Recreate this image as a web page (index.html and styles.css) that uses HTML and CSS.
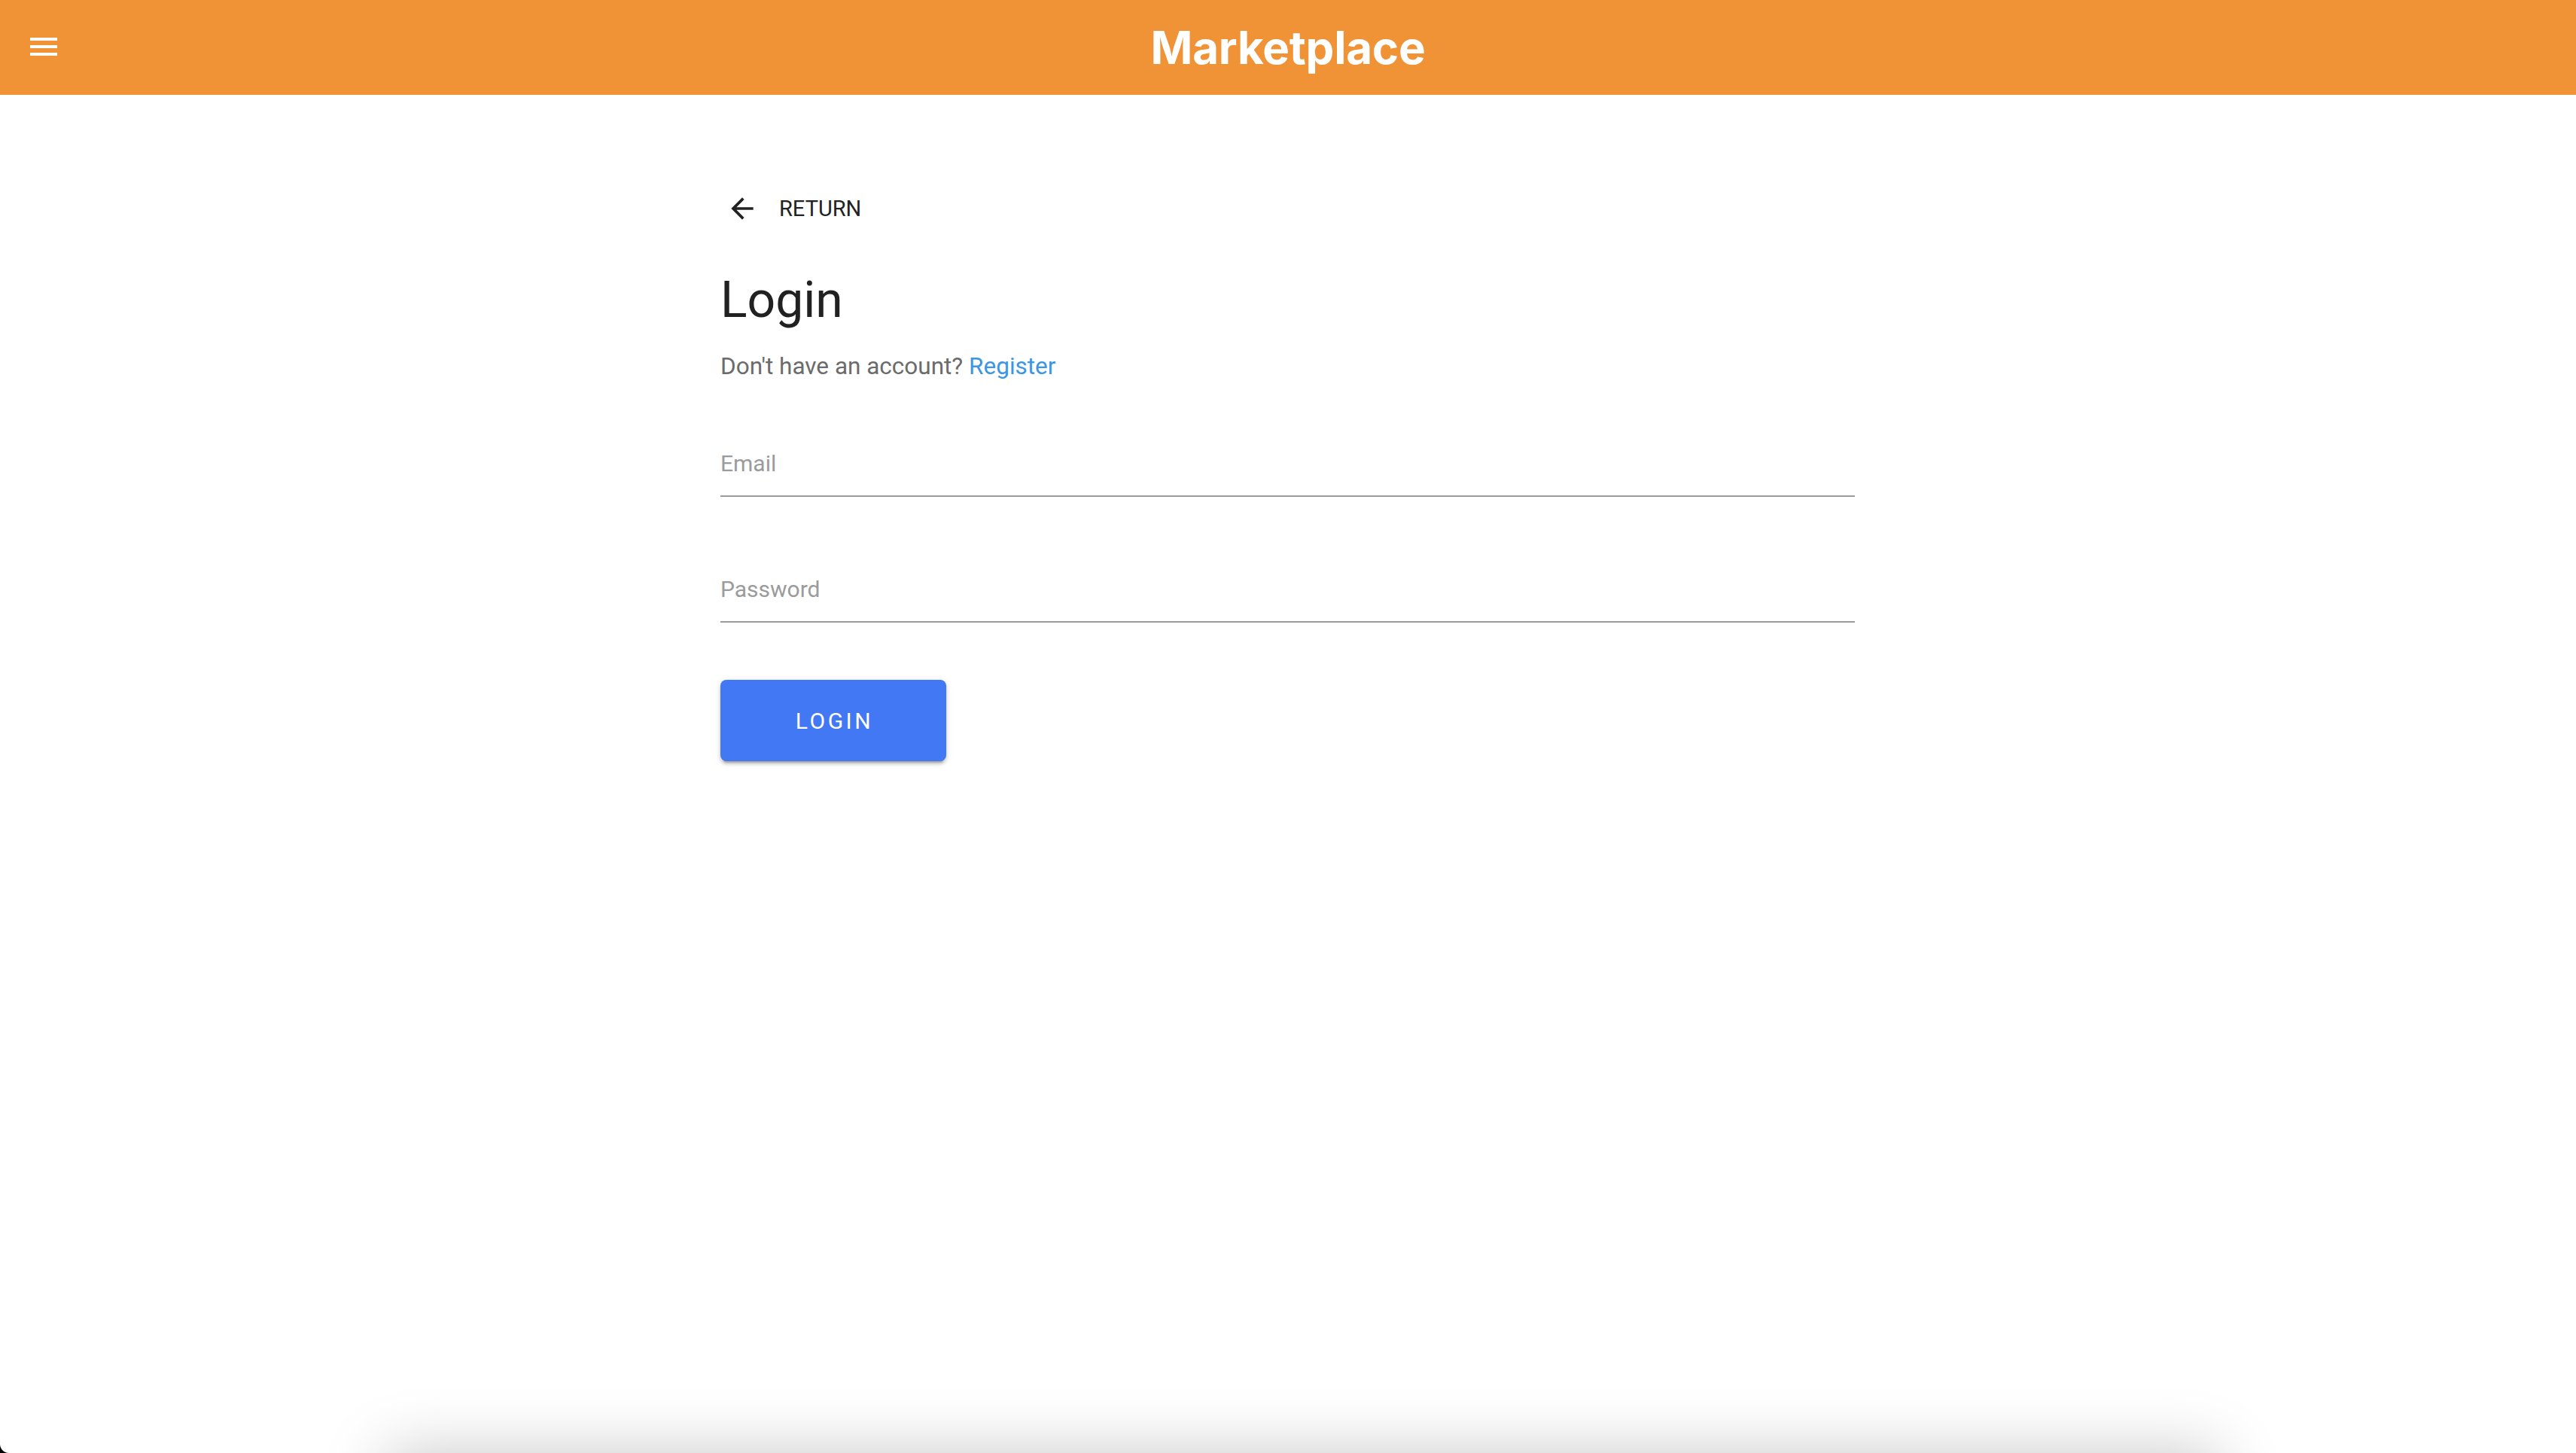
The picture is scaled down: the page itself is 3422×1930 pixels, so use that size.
FILE: index.html
```html
<!DOCTYPE html>
<html lang="en">
<head>
<meta charset="utf-8">
<title>Marketplace - Login</title>
<link rel="stylesheet" href="styles.css">
</head>
<body>
<header class="appbar">
  <button class="menu-btn" aria-label="menu">
    <svg width="48" height="48" viewBox="0 0 24 24"><path fill="#fff" d="M3 18h18v-2H3v2zm0-5h18v-2H3v2zm0-7v2h18V6H3z"/></svg>
  </button>
  <h1 class="brand">Marketplace</h1>
  <div></div>
</header>
<main class="container">
  <a class="return" href="#">
    <svg class="return-icon" width="44" height="44" viewBox="0 0 24 24"><path fill="#222" d="M20 11H7.83l5.59-5.59L12 4l-8 8 8 8 1.41-1.41L7.83 13H20v-2z"/></svg>
    <span>RETURN</span>
  </a>
  <h2 class="title">Login</h2>
  <p class="subtitle">Don't have an account? <a class="link" href="#">Register</a></p>
  <div class="field field-email"><span class="label">Email</span></div>
  <div class="field field-password"><span class="label">Password</span></div>
  <button class="login-btn">LOGIN</button>
</main>
<div class="offscreen-sheet"></div>
<div class="corner"></div>
</body>
</html>
```
FILE: styles.css
```css
html, body {
  margin: 0;
  padding: 0;
  background: #fff;
}
body {
  font-family: Roboto, "Noto Sans", sans-serif;
  width: 3422px;
  height: 1930px;
  overflow: hidden;
}
.appbar {
  height: 126px;
  background: #f09337;
  display: grid;
  grid-template-columns: 1fr auto 1fr;
  align-items: center;
}
.menu-btn {
  background: none;
  border: 0;
  padding: 0;
  margin-left: 34px;
  width: 48px;
  height: 48px;
  display: flex;
  margin-top: -2px;
}
.brand {
  margin: 0;
  font-family: Inter, "Noto Sans", sans-serif;
  font-weight: 700;
  font-size: 60px;
  line-height: 72px;
  color: #fff;
  letter-spacing: -0.2px;
}
.container {
  width: 1507px;
  margin-left: calc(50% - 754px);
}
.return {
  display: flex;
  align-items: center;
  height: 44px;
  margin-top: 129px;
  text-decoration: none;
  color: #222;
  font-size: 29px;
  line-height: 44px;
  width: max-content;
}
.return-icon {
  margin-left: 7px;
  margin-right: 27px;
}
.title {
  margin: 60px 0 0;
  font-weight: 400;
  font-size: 66px;
  line-height: 80px;
  color: #212121;
}
.subtitle {
  margin: 26px 0 0;
  font-size: 31.5px;
  line-height: 44px;
  color: #6b6b6b;
}
.link {
  color: #3b96e3;
  text-decoration: none;
}
.field {
  border-bottom: 2px solid #9a9a9a;
  padding-bottom: 20px;
}
.field-email {
  margin-top: 85px;
}
.field-password {
  margin-top: 101px;
}
.label {
  display: block;
  font-size: 30px;
  line-height: 44px;
  color: #9b9b9b;
}
.login-btn {
  margin-top: 76px;
  width: 300px;
  height: 108px;
  border: 0;
  border-radius: 8px;
  background: #4378f5;
  color: #fff;
  font-family: Roboto, "Noto Sans", sans-serif;
  font-size: 30px;
  font-weight: 400;
  letter-spacing: 3.5px;
  padding: 0 0 0 3px;
  box-shadow: 0 6px 2px -4px rgba(0,0,0,0.2), 0 4px 4px 0 rgba(0,0,0,0.14), 0 2px 10px 0 rgba(0,0,0,0.12);
}
.offscreen-sheet {
  position: fixed;
  left: 513px;
  width: 2435px;
  top: 1930px;
  height: 300px;
  background: #fff;
  box-shadow: 0 0 80px 0 rgba(0,0,0,0.22);
}
.corner {
  position: fixed;
  left: 0;
  bottom: 0;
  width: 12px;
  height: 12px;
  background: radial-gradient(circle at 100% 0, transparent 11.5px, #000 12.5px);
}
```
